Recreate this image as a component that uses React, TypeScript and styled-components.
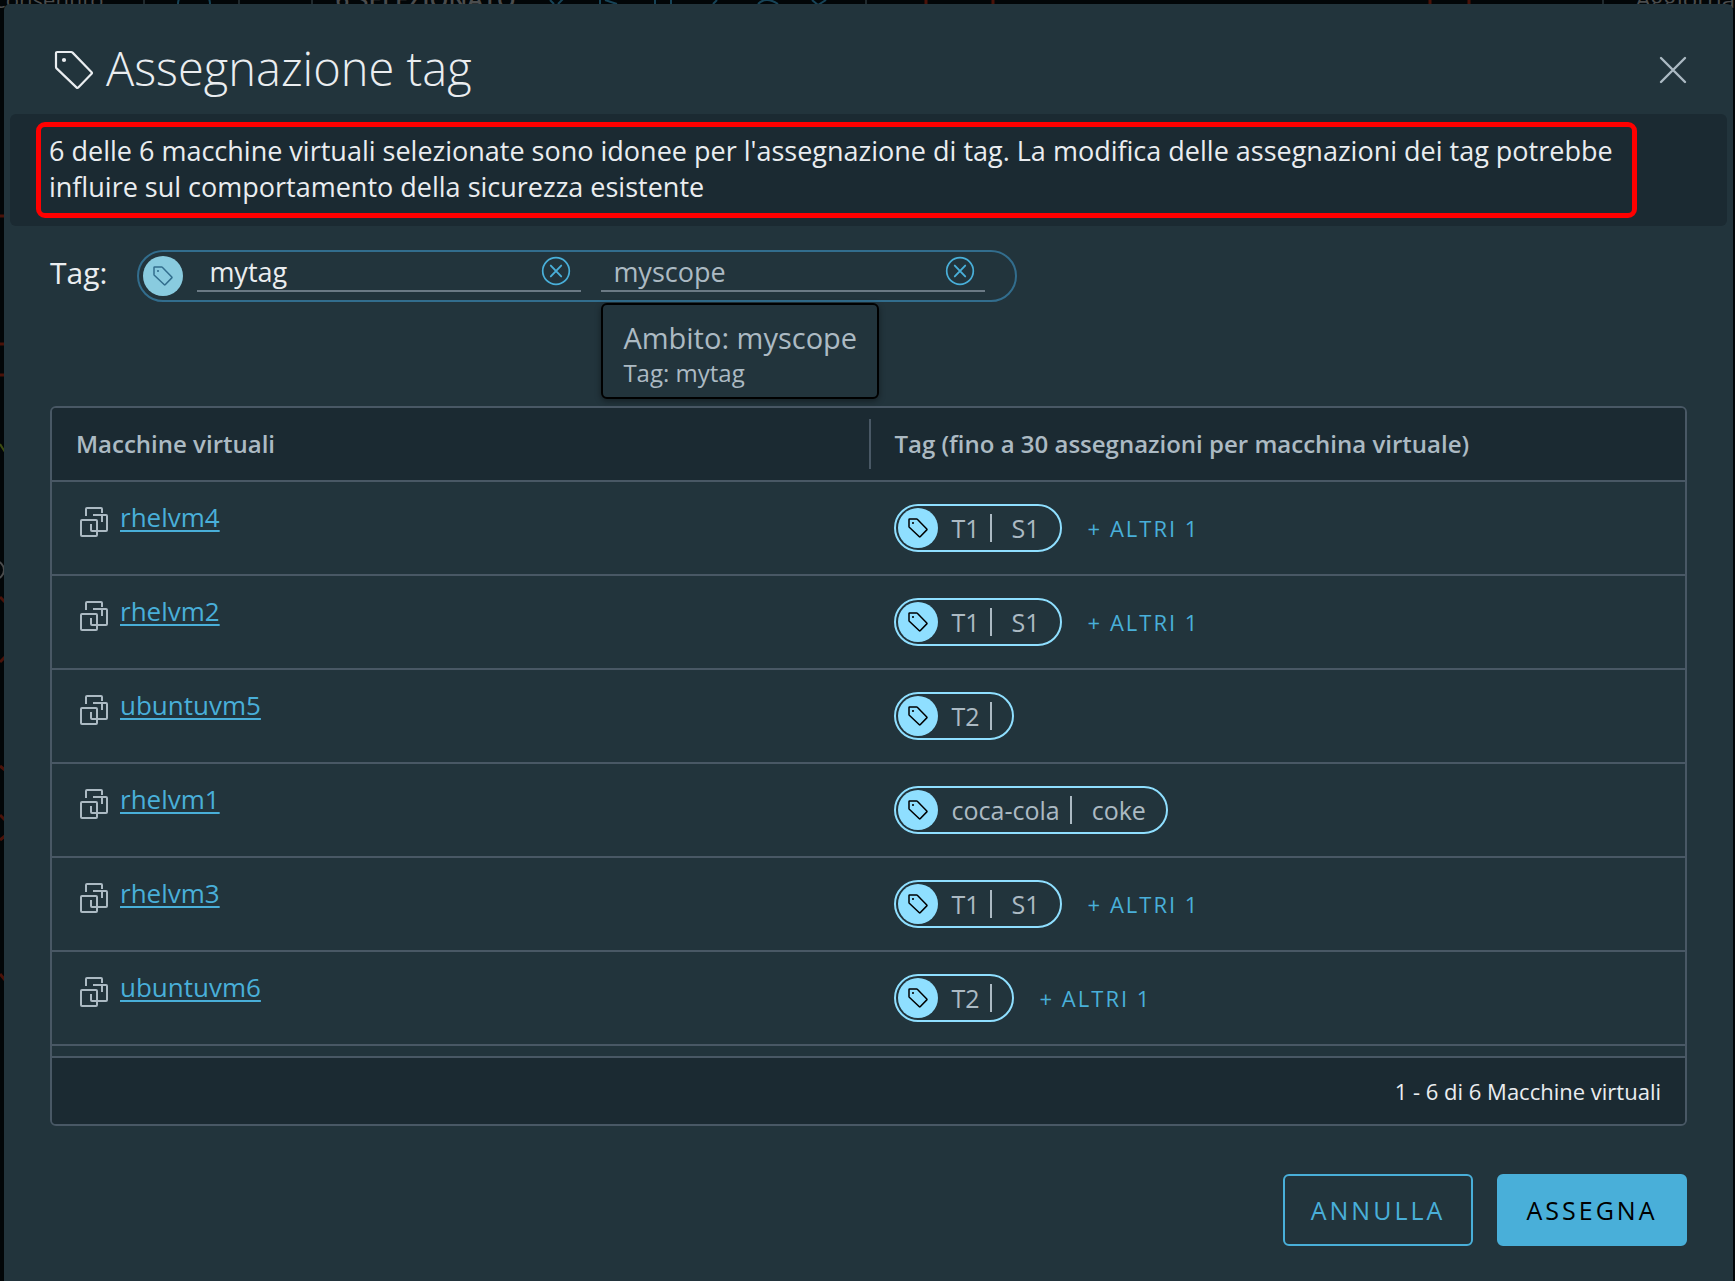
import React, { useState } from "react";
import styled, { createGlobalStyle } from "styled-components";

const GlobalStyle = createGlobalStyle`
  *, *::before, *::after { box-sizing: border-box; }
  body {
    margin: 0;
    background: #020608;
    color: #eaedf0;
    font-family: "Open Sans", "Noto Sans", sans-serif;
  }
  button, input { font-family: inherit; }
`;

const Page = styled.div`
  position: relative;
  min-height: 100vh;
  padding: 4px 2px 0 4px;
  overflow: hidden;
`;

/* Dimmed application behind the dialog */
const Backdrop = styled.div`
  position: absolute;
  inset: 0;
  overflow: hidden;
`;

const BackdropBar = styled.div`
  display: flex;
  justify-content: space-between;
  align-items: flex-end;
  height: 15px;
  margin-left: -8px;
  color: #4b4d4e;
  font-size: 24px;
  line-height: 32px;
  white-space: nowrap;
`;

const BackdropGroup = styled.div`
  display: flex;
  gap: 232px;
`;

const BackdropFilter = styled.span`
  font-size: 22px;
`;

const BackdropCount = styled.span`
  font-weight: 600;
`;

const BackdropGraph = styled.svg`
  position: absolute;
  left: 0;
  top: 0;
`;

const Dialog = styled.main`
  position: relative;
  display: flex;
  flex-direction: column;
  min-height: calc(100vh - 4px);
  padding-bottom: 35px;
  border-radius: 6px 6px 0 0;
  background: #22343c;
`;

const DialogHeader = styled.header`
  display: flex;
  align-items: center;
  justify-content: space-between;
  height: 110px;
  padding: 22px 46px 0 50px;
`;

const Heading = styled.div`
  display: flex;
  align-items: center;
  gap: 12px;
`;

const Title = styled.h1`
  margin: 0;
  padding-bottom: 4px;
  font-size: 47px;
  font-weight: 300;
  line-height: 56px;
`;

const IconButton = styled.button<{ $tone: string }>`
  display: flex;
  padding: 0;
  border: 0;
  background: none;
  color: ${(p) => p.$tone};
  cursor: pointer;
`;

const Banner = styled.section`
  margin: 0 6px;
  padding: 8px 90px 8px 26px;
  border-radius: 6px;
  background: #1b2a32;
`;

const BannerText = styled.p`
  margin: 0;
  padding: 6px 8px 8px;
  border: 5px solid #ff0000;
  border-radius: 9px;
  font-size: 27px;
  line-height: 36px;
`;

const Body = styled.div`
  display: flex;
  flex-direction: column;
  padding: 24px 46px 0;
`;

const TagRow = styled.div`
  display: flex;
  align-items: center;
  gap: 30px;
  margin-bottom: 104px;
`;

const TagLabel = styled.label`
  padding-bottom: 6px;
  font-size: 30px;
  line-height: 36px;
`;

const TagEditor = styled.div`
  display: flex;
  align-items: center;
  width: 880px;
  height: 52px;
  padding: 0 30px 0 4px;
  border: 2px solid #326d8d;
  border-radius: 26px;
`;

const TagDisc = styled.span<{ $fill: string; $ink: string }>`
  display: grid;
  flex: none;
  place-items: center;
  width: 40px;
  height: 40px;
  border-radius: 50%;
  background: ${(p) => p.$fill};
  color: ${(p) => p.$ink};
`;

const Field = styled.div`
  position: relative;
  display: flex;
  flex: 1;
  align-items: center;
  align-self: flex-start;
  min-width: 0;
  height: 40px;
  margin-left: 14px;
  padding: 0 10px 0 12px;
  border-bottom: 2px solid #6b7a85;

  & + & { margin-left: 20px; }
`;

const FieldInput = styled.input<{ $tone: string }>`
  flex: 1;
  min-width: 0;
  height: 38px;
  padding: 0;
  border: 0;
  outline: 0;
  background: none;
  color: ${(p) => p.$tone};
  font-size: 27px;
`;

const Tooltip = styled.div`
  position: absolute;
  left: 0;
  top: 51px;
  z-index: 1;
  padding: 15px 20px 7px;
  border: 2px solid #000;
  border-radius: 6px;
  background: #22343c;
  box-shadow: 0 2px 6px rgba(0, 0, 0, 0.4);
  color: #acbac3;
  white-space: nowrap;
`;

const TooltipScope = styled.div`
  font-size: 29px;
  line-height: 36px;
`;

const TooltipTag = styled.div`
  font-size: 24px;
  line-height: 34px;
`;

const Grid = styled.div`
  border: 2px solid #495865;
  border-radius: 6px;
  overflow: hidden;
`;

const Table = styled.table`
  width: 100%;
  table-layout: fixed;
  border-collapse: separate;
  border-spacing: 0;
  margin-bottom: 10px;
`;

const HeadCell = styled.th`
  height: 74px;
  padding: 0;
  border-bottom: 2px solid #495865;
  background: #1b2a32;
  color: #acbac3;
  font-size: 24px;
  font-weight: 600;
  text-align: left;
`;

const HeadLabel = styled.div<{ $divided?: boolean }>`
  padding-left: 24px;
  border-left: ${(p) => (p.$divided ? "2px solid #495865" : "0")};
  line-height: 50px;
`;

const Cell = styled.td`
  height: 94px;
  padding: 0 24px;
  border-bottom: 2px solid #495865;
`;

const MachineCell = styled(Cell)`
  padding: 17px 28px;
  vertical-align: top;
`;

const Machine = styled.div`
  display: flex;
  gap: 12px;
  color: #acbac3;

  & > svg { margin-top: 8px; }
`;

const MachineLink = styled.a`
  color: #49afd9;
  font-size: 26px;
  line-height: 36px;
  text-decoration: underline;
  text-decoration-thickness: 2px;
  text-underline-offset: 3px;
`;

const Tags = styled.div`
  display: flex;
  align-items: center;
  gap: 26px;
  padding-left: 1px;
`;

const Chip = styled.span`
  display: flex;
  align-items: center;
  height: 48px;
  padding: 0 20px 0 2px;
  border: 2px solid #8fdfff;
  border-radius: 24px;
  color: #acbac3;
  font-size: 25px;
`;

const ChipName = styled.span`
  margin-left: 14px;
  padding-right: 10px;
  border-right: 2px solid #acbac3;
  line-height: 28px;
`;

const ChipScope = styled.span`
  margin-left: 20px;
  line-height: 28px;
`;

const MoreButton = styled.button`
  padding: 0;
  border: 0;
  background: none;
  color: #49afd9;
  font-size: 22px;
  font-weight: 500;
  letter-spacing: 2px;
  cursor: pointer;
`;

const GridFooter = styled.div`
  display: flex;
  align-items: center;
  justify-content: flex-end;
  height: 68px;
  padding-right: 24px;
  border-top: 2px solid #495865;
  background: #1b2a32;
  font-size: 22px;
`;

const Actions = styled.footer`
  display: flex;
  justify-content: flex-end;
  gap: 24px;
  margin-top: 48px;
`;

const ActionButton = styled.button<{ $primary?: boolean }>`
  width: 190px;
  height: 72px;
  padding: 0;
  border: 2px solid #49afd9;
  border-radius: 6px;
  background: ${(p) => (p.$primary ? "#49afd9" : "transparent")};
  color: ${(p) => (p.$primary ? "#000" : "#49afd9")};
  font-size: 25px;
  font-weight: 500;
  letter-spacing: 3px;
  cursor: pointer;
`;

function TagIcon({ size, stroke }: { size: number; stroke: number }) {
  return (
    <svg width={size} height={size} viewBox="0 0 40 40" fill="none" aria-hidden="true">
      <path
        d="M2 3.2Q2 2 3.2 2H17.2Q18 2 18.6 2.6L37.6 22.2Q38.4 23 37.6 23.8L24.3 37.6Q23.5 38.4 22.7 37.6L2.6 18.4Q2 17.8 2 17Z"
        stroke="currentColor"
        strokeWidth={stroke}
        strokeLinejoin="round"
      />
      <circle cx="10" cy="10" r="2.1" fill="currentColor" />
    </svg>
  );
}

function CloseIcon() {
  return (
    <svg width="28" height="28" viewBox="0 0 28 28" fill="none" aria-hidden="true">
      <path d="M2 2L26 26M26 2L2 26" stroke="currentColor" strokeWidth="2.4" strokeLinecap="round" />
    </svg>
  );
}

function ClearIcon() {
  return (
    <svg width="30" height="30" viewBox="0 0 30 30" fill="none" aria-hidden="true">
      <circle cx="15" cy="15" r="13.3" stroke="currentColor" strokeWidth="1.7" />
      <path d="M9.8 9.6L20.2 20.4M20.2 9.6L9.8 20.4" stroke="currentColor" strokeWidth="1.9" strokeLinecap="round" />
    </svg>
  );
}

function MachineIcon() {
  return (
    <svg width="28" height="30" viewBox="0 0 28 30" fill="none" stroke="currentColor" strokeWidth="2" aria-hidden="true">
      <path d="M6 9V2Q6 1 7 1H21Q22 1 22 2V6" />
      <path d="M13 8H26Q27 8 27 9V23Q27 24 26 24H12Q11 24 11 23V17M22 8V15" />
      <rect x="1" y="13" width="16" height="16" rx="1" />
    </svg>
  );
}

type Row = { name: string; tag: string; scope?: string; more?: number };

const rows: Row[] = [
  { name: "rhelvm4", tag: "T1", scope: "S1", more: 1 },
  { name: "rhelvm2", tag: "T1", scope: "S1", more: 1 },
  { name: "ubuntuvm5", tag: "T2" },
  { name: "rhelvm1", tag: "coca-cola", scope: "coke" },
  { name: "rhelvm3", tag: "T1", scope: "S1", more: 1 },
  { name: "ubuntuvm6", tag: "T2", more: 1 },
];

export default function App() {
  const [tag, setTag] = useState("mytag");
  const [scope, setScope] = useState("myscope");

  return (
    <Page>
      <GlobalStyle />
      <Backdrop aria-hidden="true">
        <BackdropBar>
          <BackdropGroup>
            <BackdropFilter>Consentito</BackdropFilter>
            <BackdropCount>6 SELEZIONATO</BackdropCount>
          </BackdropGroup>
          <span>Aggiorna</span>
        </BackdropBar>
        <BackdropGraph width="1735" height="1281" fill="none">
          <g stroke="#174458" strokeWidth="2">
            <path d="M178 4Q178 -4 186 -8M210 4Q210 -4 202 -8M550 0L554 4M558 4L564 -2M600 0V4M605 0L617 4M655 0V4M671 0V4M713 4L717 0M758 4Q766 -4 778 4M812 0L818 5L826 0" />
          </g>
          <path d="M144 0V4M239 0V4M312 0V4M866 0V4M1603 0V4" stroke="#202a2e" strokeWidth="2" />
          <g stroke="#4a1209" strokeWidth="3">
            <path d="M926 0V4M993 0V4M1430 0V4M1469 0V4M0 216H4M0 344H4M0 375H4M0 597L5 602M0 662L5 657M0 766L5 770M0 815L5 820M0 840L5 836M0 974L5 980" />
          </g>
          <circle cx="-5" cy="570" r="9" stroke="#4b4d4e" strokeWidth="2" />
          <path d="M0 444L5 452" stroke="#3c4c12" strokeWidth="2" />
        </BackdropGraph>
      </Backdrop>

      <Dialog role="dialog" aria-labelledby="dialog-title">
        <DialogHeader>
          <Heading>
            <TagIcon size={40} stroke={2.2} />
            <Title id="dialog-title">Assegnazione tag</Title>
          </Heading>
          <IconButton type="button" $tone="#acbac3" aria-label="Chiudi">
            <CloseIcon />
          </IconButton>
        </DialogHeader>

        <Banner>
          <BannerText>
            6 delle 6 macchine virtuali selezionate sono idonee per l'assegnazione di tag. La modifica
            delle assegnazioni dei tag potrebbe influire sul comportamento della sicurezza esistente
          </BannerText>
        </Banner>

        <Body>
          <TagRow>
            <TagLabel htmlFor="tag-input">Tag:</TagLabel>
            <TagEditor>
              <TagDisc $fill="#89cbdf" $ink="#326d8d">
                <TagIcon size={20} stroke={3} />
              </TagDisc>
              <Field>
                <FieldInput id="tag-input" $tone="#eaedf0" value={tag} onChange={(e) => setTag(e.target.value)} />
                <IconButton type="button" $tone="#49afd9" aria-label="Cancella tag" onClick={() => setTag("")}>
                  <ClearIcon />
                </IconButton>
              </Field>
              <Field>
                <FieldInput
                  aria-label="Ambito"
                  $tone="#acbac3"
                  value={scope}
                  onChange={(e) => setScope(e.target.value)}
                />
                <IconButton type="button" $tone="#49afd9" aria-label="Cancella ambito" onClick={() => setScope("")}>
                  <ClearIcon />
                </IconButton>
                <Tooltip role="tooltip">
                  <TooltipScope>Ambito: myscope</TooltipScope>
                  <TooltipTag>Tag: mytag</TooltipTag>
                </Tooltip>
              </Field>
            </TagEditor>
          </TagRow>

          <Grid>
            <Table>
              <thead>
                <tr>
                  <HeadCell scope="col">
                    <HeadLabel>Macchine virtuali</HeadLabel>
                  </HeadCell>
                  <HeadCell scope="col">
                    <HeadLabel $divided>Tag (fino a 30 assegnazioni per macchina virtuale)</HeadLabel>
                  </HeadCell>
                </tr>
              </thead>
              <tbody>
                {rows.map((row) => (
                  <tr key={row.name}>
                    <MachineCell>
                      <Machine>
                        <MachineIcon />
                        <MachineLink href="#">{row.name}</MachineLink>
                      </Machine>
                    </MachineCell>
                    <Cell>
                      <Tags>
                        <Chip>
                          <TagDisc $fill="#8fdfff" $ink="#000">
                            <TagIcon size={20} stroke={3} />
                          </TagDisc>
                          <ChipName>{row.tag}</ChipName>
                          {row.scope && <ChipScope>{row.scope}</ChipScope>}
                        </Chip>
                        {row.more && <MoreButton type="button">+ ALTRI {row.more}</MoreButton>}
                      </Tags>
                    </Cell>
                  </tr>
                ))}
              </tbody>
            </Table>
            <GridFooter>1 - 6 di 6 Macchine virtuali</GridFooter>
          </Grid>

          <Actions>
            <ActionButton type="button">ANNULLA</ActionButton>
            <ActionButton type="button" $primary>
              ASSEGNA
            </ActionButton>
          </Actions>
        </Body>
      </Dialog>
    </Page>
  );
}
